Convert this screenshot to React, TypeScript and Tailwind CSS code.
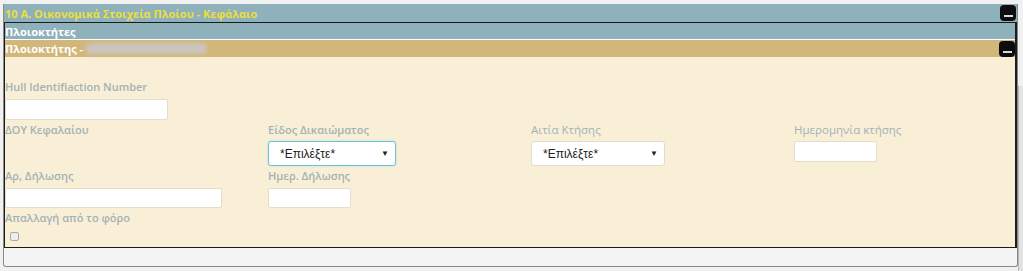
import React from 'react';

const MinusButton: React.FC = () => (
  <div className="w-4 h-4 bg-[#0d0d0d] rounded-[4px] flex items-end justify-center pb-[4px]">
    <div className="w-[9px] h-[2px] bg-[#d9d9d9]" />
  </div>
);

const Label: React.FC<{ text: string; light?: boolean }> = ({ text, light }) => (
  <div className={`leading-[14px] text-[#a3b3b5] ${light ? 'text-[11.5px] font-normal' : 'text-[11px] font-semibold'}`}>{text}</div>
);

const Select: React.FC<{ focused?: boolean; width: string }> = ({ focused, width }) => (
  <div
    className={`${width} h-[25px] bg-white rounded-[3px] flex items-center justify-between pl-[11px] pr-[6px] text-[12px] text-[#222] font-['Liberation_Sans',sans-serif] ${
      focused ? 'border border-[#6cc4d6] shadow-[0_0_2px_#9bd9e6]' : 'border border-[#e2dccb]'
    }`}
  >
    <span>*Επιλέξτε*</span>
    <span className="text-[8px] leading-none">▼</span>
  </div>
);

const App: React.FC = () => {
  return (
    <div className="relative w-[1023px] h-[271px] bg-[#f1f1f1] overflow-hidden font-['Open_Sans',sans-serif]">
      <div className="ml-[3px] mt-[4px] w-[1015px] border-x border-b border-[#8a8a8a] rounded-b-[3px] bg-[#f4f4f4]">
        {/* Section title */}
        <div className="h-[18px] bg-[#8fb1bb] flex items-center justify-between pl-[1px] pr-[1px]">
          <span className="text-[11px] font-bold text-[#ecdf3c] leading-none">
            10 Α. Οικονομικά Στοιχεία Πλοίου - Κεφάλαιο
          </span>
          <MinusButton />
        </div>

        {/* Owners panel */}
        <div className="border border-[#1c1c1c] border-r-[2px]">
          <div className="h-[17px] bg-[#8fb1bb] border-b border-white flex items-center">
            <span className="text-[11px] font-bold text-white leading-none">Πλοιοκτήτες</span>
          </div>
          <div className="h-[17px] bg-[#d3b679] flex items-center justify-between">
            <div className="flex items-center gap-[2px]">
              <span className="text-[11px] font-bold text-white leading-none">Πλοιοκτήτης -</span>
              <div className="w-[122px] h-[11px] rounded-full bg-[#c9c6bf] blur-[2px]" />
            </div>
            <div className="mt-[1px]">
              <MinusButton />
            </div>
          </div>

          <div className="bg-[#f8efd6] pt-[23px] pb-[6px]">
            <Label text="Hull Identifiaction Number" />
            <div className="mt-[5px] w-[163px] h-[21px] bg-white border border-[#e4ddca] rounded-[2px]" />

            <div className="mt-[3px] grid grid-cols-[263px_263px_263px_1fr]">
              <div>
                <Label text="ΔΟΥ Κεφαλαίου" />
              </div>
              <div>
                <Label text="Είδος Δικαιώματος" />
                <div className="mt-[4px]">
                  <Select focused width="w-[128px]" />
                </div>
              </div>
              <div>
                <Label text="Αιτία Κτήσης" light />
                <div className="mt-[4px]">
                  <Select width="w-[134px]" />
                </div>
              </div>
              <div>
                <Label text="Ημερομηνία κτήσης" light />
                <div className="mt-[4px] w-[83px] h-[21px] bg-white border border-[#e4ddca] rounded-[2px]" />
              </div>
            </div>

            <div className="mt-[3px] grid grid-cols-[263px_263px_1fr]">
              <div>
                <Label text="Αρ, Δήλωσης" />
                <div className="mt-[5px] w-[217px] h-[20px] bg-white border border-[#e4ddca] rounded-[2px]" />
              </div>
              <div>
                <Label text="Ημερ. Δήλωσης" />
                <div className="mt-[5px] w-[83px] h-[20px] bg-white border border-[#e4ddca] rounded-[2px]" />
              </div>
              <div />
            </div>

            <div className="mt-[3px]">
              <Label text="Απαλλαγή από το φόρο" />
              <div className="mt-[7px] ml-[5px] w-[9px] h-[9px] bg-[#eeeeee] border border-[#a9a9a9] rounded-[2px]" />
            </div>
          </div>
        </div>

        {/* Footer strip */}
        <div className="h-[18px]" />
      </div>

      {/* scrollbar edge */}
      <div className="absolute right-0 top-[86px] w-[5px] h-[185px] bg-[#e3e3e3] border-l border-[#b5b5b5]" />
    </div>
  );
};

export default App;
